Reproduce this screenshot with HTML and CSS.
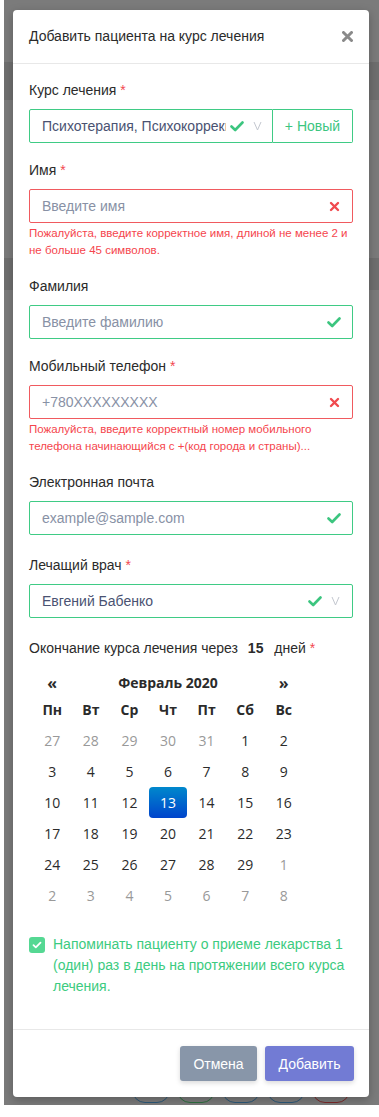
FILE: index.html
```html
<!DOCTYPE html>
<html lang="ru">
<head>
<meta charset="utf-8">
<title>Добавить пациента</title>
<link rel="stylesheet" href="styles.css">
</head>
<body>
<div class="page">
  <div class="backdrop">
    <div class="gap g1"></div>
    <div class="band b1"></div>
    <div class="gap g2"></div>
    <div class="band b2"></div>
    <div class="pills">
      <span class="pill blue"></span>
      <span class="pill green"></span>
      <span class="pill blue"></span>
      <span class="pill blue"></span>
      <span class="pill red"></span>
    </div>
  </div>

  <div class="modal">
    <div class="modal-header">
      <div class="modal-title">Добавить пациента на курс лечения</div>
      <svg class="close" width="11" height="11" viewBox="0 0 11 11"><path d="M1.5 1.5L9.5 9.5M9.5 1.5L1.5 9.5" stroke="#8a8a8a" stroke-width="3" stroke-linecap="round"/></svg>
    </div>

    <div class="modal-body">
      <div class="group">
        <div class="label">Курс лечения <span class="req">*</span></div>
        <div class="input-group">
          <div class="field ok select course">
            <span class="value clip">Психотерапия, Психокоррекция</span>
            <svg class="ico-check" width="14" height="11" viewBox="0 0 14 11"><path d="M1.5 5.5L5.2 9L12.5 1.5" fill="none" stroke="#3cc57f" stroke-width="2.6" stroke-linecap="round" stroke-linejoin="round"/></svg>
            <svg class="ico-chev" width="9" height="10" viewBox="0 0 9 10"><path d="M1 1L4.5 9L8 1" fill="none" stroke="#c3c7cf" stroke-width="1"/></svg>
          </div>
          <div class="btn-new">+ Новый</div>
        </div>
      </div>

      <div class="group">
        <div class="label">Имя <span class="req">*</span></div>
        <div class="field err">
          <span class="ph">Введите имя</span>
          <svg class="ico-x" width="11" height="11" viewBox="0 0 11 11"><path d="M2 2L9 9M9 2L2 9" stroke="#f04a4f" stroke-width="2.4" stroke-linecap="round"/></svg>
        </div>
        <div class="error">Пожалуйста, введите корректное имя, длиной не менее 2 и не больше 45 символов.</div>
      </div>

      <div class="group">
        <div class="label">Фамилия</div>
        <div class="field ok">
          <span class="ph">Введите фамилию</span>
          <svg class="ico-check" width="14" height="11" viewBox="0 0 14 11"><path d="M1.5 5.5L5.2 9L12.5 1.5" fill="none" stroke="#3cc57f" stroke-width="2.6" stroke-linecap="round" stroke-linejoin="round"/></svg>
        </div>
      </div>

      <div class="group">
        <div class="label">Мобильный телефон <span class="req">*</span></div>
        <div class="field err">
          <span class="ph">+780XXXXXXXXX</span>
          <svg class="ico-x" width="11" height="11" viewBox="0 0 11 11"><path d="M2 2L9 9M9 2L2 9" stroke="#f04a4f" stroke-width="2.4" stroke-linecap="round"/></svg>
        </div>
        <div class="error">Пожалуйста, введите корректный номер мобильного телефона начинающийся с +(код города и страны)...</div>
      </div>

      <div class="group">
        <div class="label">Электронная почта</div>
        <div class="field ok">
          <span class="ph">example@sample.com</span>
          <svg class="ico-check" width="14" height="11" viewBox="0 0 14 11"><path d="M1.5 5.5L5.2 9L12.5 1.5" fill="none" stroke="#3cc57f" stroke-width="2.6" stroke-linecap="round" stroke-linejoin="round"/></svg>
        </div>
      </div>

      <div class="group spaced">
        <div class="label">Лечащий врач <span class="req">*</span></div>
        <div class="field ok select">
          <span class="value">Евгений Бабенко</span>
          <svg class="ico-check" width="14" height="11" viewBox="0 0 14 11"><path d="M1.5 5.5L5.2 9L12.5 1.5" fill="none" stroke="#3cc57f" stroke-width="2.6" stroke-linecap="round" stroke-linejoin="round"/></svg>
          <svg class="ico-chev" width="9" height="10" viewBox="0 0 9 10"><path d="M1 1L4.5 9L8 1" fill="none" stroke="#c3c7cf" stroke-width="1"/></svg>
        </div>
      </div>

      <div class="group spaced">
        <div class="label">Окончание курса лечения через <b class="days">15</b> дней <span class="req">*</span></div>
        <div class="calendar">
          <div class="cal-nav">«</div>
          <div class="cal-title">Февраль 2020</div>
          <div class="cal-nav">»</div>
          <div class="dow">Пн</div><div class="dow">Вт</div><div class="dow">Ср</div><div class="dow">Чт</div><div class="dow">Пт</div><div class="dow">Сб</div><div class="dow">Вс</div>
          <div class="day muted">27</div><div class="day muted">28</div><div class="day muted">29</div><div class="day muted">30</div><div class="day muted">31</div><div class="day">1</div><div class="day">2</div>
          <div class="day">3</div><div class="day">4</div><div class="day">5</div><div class="day">6</div><div class="day">7</div><div class="day">8</div><div class="day">9</div>
          <div class="day">10</div><div class="day">11</div><div class="day">12</div><div class="day active">13</div><div class="day">14</div><div class="day">15</div><div class="day">16</div>
          <div class="day">17</div><div class="day">18</div><div class="day">19</div><div class="day">20</div><div class="day">21</div><div class="day">22</div><div class="day">23</div>
          <div class="day">24</div><div class="day">25</div><div class="day">26</div><div class="day">27</div><div class="day">28</div><div class="day">29</div><div class="day muted">1</div>
          <div class="day muted">2</div><div class="day muted">3</div><div class="day muted">4</div><div class="day muted">5</div><div class="day muted">6</div><div class="day muted">7</div><div class="day muted">8</div>
        </div>
      </div>

      <div class="group check-group">
        <span class="checkbox"><svg width="10" height="8" viewBox="0 0 10 8"><path d="M1.5 4.2L3.8 6.3L8.5 1.6" fill="none" stroke="#fff" stroke-width="1.8" stroke-linecap="round" stroke-linejoin="round"/></svg></span>
        <span class="check-text">Напоминать пациенту о приеме лекарства 1 (один) раз в день на протяжении всего курса лечения.</span>
      </div>
    </div>

    <div class="modal-footer">
      <button class="btn btn-cancel">Отмена</button>
      <button class="btn btn-add">Добавить</button>
    </div>
  </div>
</div>
</body>
</html>
```

FILE: styles.css
```css
html, body {
  margin: 0;
  padding: 0;
  background: #ffffff;
}

.page {
  margin-left: 4px;
  height: 1105px;
  background: #7b7b7b;
  position: relative;
  overflow: hidden;
  font-family: "Liberation Sans", Arial, sans-serif;
}

.backdrop {
  height: 100%;
  display: flex;
  flex-direction: column;
}

.g1 { height: 62px; }
.b1 { height: 38px; }
.g2 { height: 158px; }
.b2 { height: 32px; }

.band { background: #6f6f6f; }

.pills {
  margin-top: auto;
  margin-bottom: 2px;
  display: flex;
  gap: 7px;
  padding-left: 128px;
}

.pill {
  display: block;
  width: 38px;
  height: 30px;
  border-radius: 13px;
  border: 1.5px solid #2c5878;
  box-sizing: border-box;
}
.pill.green { border-color: #2e7040; }
.pill.red { border-color: #7c2a2a; }

.modal {
  position: absolute;
  left: 9px;
  top: 10px;
  width: 356px;
  background: #fff;
  border-radius: 4px;
  box-shadow: 0 3px 10px rgba(0, 0, 0, 0.25);
}

.modal-header {
  display: flex;
  justify-content: space-between;
  align-items: center;
  padding: 16px 16px 16px 16px;
  border-bottom: 1px solid #e8e8e8;
}

.modal-title {
  font-size: 14px;
  line-height: 21px;
  color: #2b2b2b;
}

.close {
  display: block;
}

.modal-body {
  padding: 16px 16px 16px 16px;
}

.group {
  margin-bottom: 17px;
}

.group.spaced {
  padding-top: 3px;
}

.label {
  font-size: 14px;
  line-height: 20px;
  color: #2b2b2b;
  margin-bottom: 9px;
}

.req {
  color: #f2474f;
}

.days {
  margin: 0 7px 0 6px;
}

.field {
  height: 34px;
  box-sizing: border-box;
  border: 1px solid #3fcb85;
  border-radius: 2px;
  display: flex;
  align-items: center;
  padding: 0 12px 0 12px;
  font-size: 14px;
}

.field.err {
  border-color: #f05a5f;
}

.ph {
  flex: 1;
  color: #8891a5;
}

.value {
  flex: 1;
  color: #4a5272;
  white-space: nowrap;
}

.clip {
  overflow: hidden;
  flex: 0 0 184px;
}

.ico-check { display: block; flex: none; margin-right: -1px; }
.ico-x { display: block; flex: none; }
.ico-chev { display: block; flex: none; margin-left: 9px; }

.select .ico-check { margin-right: 0; }
.course .ico-check { margin-left: 4px; }

.input-group {
  display: flex;
}

.input-group .course {
  width: 244px;
  flex: none;
  border-radius: 2px 0 0 2px;
}

.btn-new {
  flex: 1;
  height: 34px;
  box-sizing: border-box;
  border: 1px solid #3fcb85;
  border-left: none;
  border-radius: 0 2px 2px 0;
  display: flex;
  align-items: center;
  justify-content: center;
  color: #3cc57f;
  font-size: 14px;
}

.error {
  margin-top: 2px;
  font-size: 11.5px;
  line-height: 17px;
  color: #f5454d;
}

.calendar {
  margin: 10px 0 0 4px;
  width: 270px;
  display: grid;
  grid-template-columns: repeat(7, 1fr);
  grid-template-rows: 30px 27px repeat(6, 31px);
  font-family: "Open Sans", sans-serif;
  font-size: 14px;
  color: #2b2b2b;
  text-align: center;
}

.cal-nav {
  font-weight: 700;
  font-size: 16px;
  line-height: 30px;
}

.cal-title {
  grid-column: span 5;
  font-weight: 700;
  line-height: 30px;
}

.dow {
  font-weight: 700;
  line-height: 24px;
}

.day {
  line-height: 31px;
  border-radius: 4px;
}

.day.muted {
  color: #999;
}

.day.active {
  color: #fff;
  background: linear-gradient(#0088cc, #0044cc);
}

.check-group {
  display: flex;
  align-items: flex-start;
  margin-top: 23px;
  margin-bottom: 16px;
}

.checkbox {
  flex: none;
  width: 16px;
  height: 16px;
  margin-top: 3px;
  border-radius: 3px;
  background: #55d893;
  display: flex;
  align-items: center;
  justify-content: center;
}

.check-text {
  margin-left: 8px;
  font-size: 14px;
  line-height: 21px;
  color: #3ccb80;
}

.modal-footer {
  border-top: 1px solid #e8e8e8;
  padding: 16px 15px 16px 16px;
  display: flex;
  justify-content: flex-end;
  gap: 8px;
}

.btn {
  height: 35px;
  border: none;
  border-radius: 3px;
  color: #fff;
  font-family: "Liberation Sans", Arial, sans-serif;
  font-size: 14px;
  box-shadow: 0 2px 5px rgba(0, 0, 0, 0.15);
}

.btn-cancel {
  width: 77px;
  background: #8896a9;
}

.btn-add {
  width: 89px;
  background: #727bd4;
}
```
